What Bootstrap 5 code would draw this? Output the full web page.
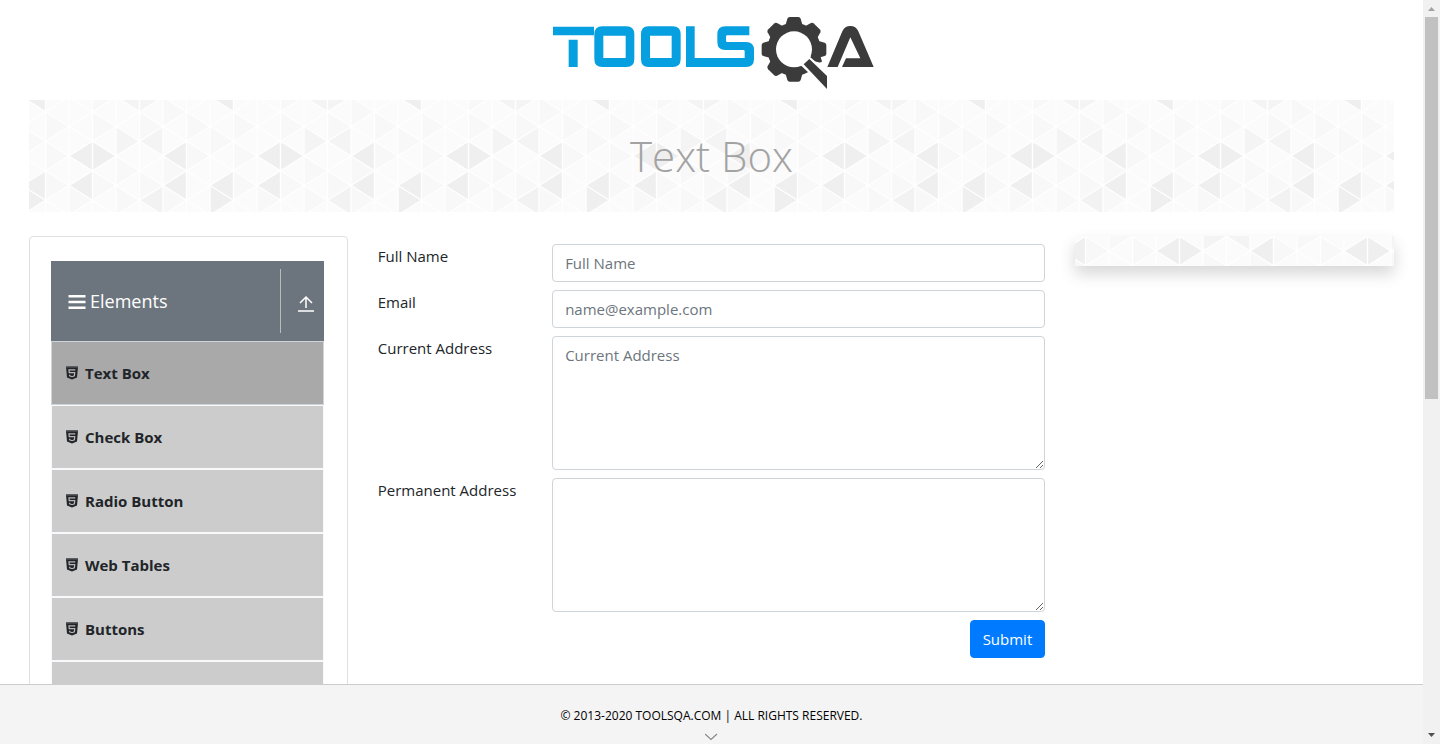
<!DOCTYPE html>
<html lang="en">
<head>
<meta charset="utf-8">
<meta name="viewport" content="width=device-width, initial-scale=1">
<title>ToolsQA - Text Box</title>
<link href="https://cdn.jsdelivr.net/npm/bootstrap@5.3.0/dist/css/bootstrap.min.css" rel="stylesheet">
<style>
  body { font-family: "Segoe UI", "Open Sans", sans-serif; font-size: 15px; line-height: 24px; color: #212529; }
  .triangles {
    background-color: #fbfbfb;
    background-image: url("data:image/svg+xml,%3Csvg xmlns='http://www.w3.org/2000/svg' width='188' height='118'%3E%3Crect width='188' height='118' fill='%23fbfbfb'/%3E%3Cg fill='%23f8f8f8'%3E%3Cpath d='M23.5 14.75l23.5 14.75l-23.5 14.75zM23.5 44.25l23.5 14.75l-23.5 14.75zM23.5 73.75l23.5 14.75l-23.5 14.75zM70.5-14.75l23.5 14.75l-23.5 14.75zM70.5 14.75l23.5 14.75l-23.5 14.75zM70.5 73.75l23.5 14.75l-23.5 14.75zM117.5 14.75l23.5 14.75l-23.5 14.75zM117.5 73.75l23.5 14.75l-23.5 14.75zM164.5 14.75l23.5 14.75l-23.5 14.75zM164.5 44.25l23.5 14.75l-23.5 14.75z'/%3E%3Cpath d='M0 29.5l23.5 14.75l-23.5 14.75zM94 59l23.5 14.75l-23.5 14.75zM94 88.5l23.5 14.75l-23.5 14.75zM141 0l23.5 14.75l-23.5 14.75zM141 59l23.5 14.75l-23.5 14.75zM141 88.5l23.5 14.75l-23.5 14.75zM47 88.5l23.5 14.75l-23.5 14.75z'/%3E%3C/g%3E%3Cpath fill='%23f4f4f4' d='M94 29.5l23.5 14.75L94 59zM141 29.5V59l-23.5-14.75zM94 0l23.5-14.75v29.5zM117.5-14.75L141 0l-23.5 14.75z'/%3E%3Cpath fill='%23f2f2f2' d='M117.5 103.25L141 88.5V118z'/%3E%3Cpath fill='%23efefef' d='M47 59l23.5-14.75L94 59 70.5 73.75zM0 88.5l23.5-14.75v29.5zM0 88.5l23.5 14.75L0 118zM47 88.5l23.5-14.75v29.5zM141 59l23.5-14.75v29.5zM141 88.5l23.5-14.75v29.5zM0 0l23.5-14.75v29.5z'/%3E%3Cpath fill='none' stroke='white' stroke-width='1.4' d='M0 0V118M23.5 0V118M47 0V118M70.5 0V118M94 0V118M117.5 0V118M141 0V118M164.5 0V118M188 0V118M0 0L188 118M0 29.5L141 118M0 59L94 118M0 88.5L47 118M47 0L188 88.5M94 0L188 59M141 0L188 29.5M188 0L0 118M188 29.5L47 118M188 59L94 118M188 88.5L141 118M141 0L0 88.5M94 0L0 59M47 0L0 29.5'/%3E%3C/svg%3E");
  }
  .page-wrap { padding: 0 29px; }
  .logo-row { padding: 5px 0; }
  .page-banner { height: 112px; background-position: -7px -3px; margin-bottom: 24px; }
  .page-banner h1 { font-size: 42px; line-height: 58px; font-weight: 300; color: #a3a3a3; }
  .wide-gutters { --bs-gutter-x: 30px; }
  .menu-card { border: 1px solid #dfdfdf; border-radius: 4px; padding: 24px 23px 24px 21px; }
  .menu-head { height: 80px; background: #6c757d; color: #fff; font-size: 18px; padding: 8px 0 8px 17px; }
  .menu-head button { width: 44px; border-left: 1px solid #bbb; padding-left: 8px; color: #fff; }
  .menu-link { height: 64px; padding: 0 14px; gap: 7px; background: #ccc; border: 1px solid #f8f9fa; color: #212529; font-weight: 700; text-decoration: none; }
  .menu-link.current { background: #a9a9a9; border-color: #ced4da; }
  .field { font-size: 15px; line-height: 24px; border-color: #ced4da; border-radius: 4px; color: #495057; }
  .field::placeholder { color: #6c757d; }
  .submit-btn { font-size: 15px; line-height: 24px; border-radius: 4px; background: #007bff; border-color: #007bff; }
  .side-ad { height: 30px; background-position: 34px -44px; box-shadow: 0 8px 16px rgba(0,0,0,.16); }
  .site-footer { height: 60px; background: #f4f4f4; border-top: 1px solid #ccc; font-size: 12px; line-height: 18px; padding-top: 22px; color: #000; }
  .scroll-track { width: 17px; background: #f1f1f1; }
  .scroll-track svg { display: block; }
  .scroll-thumb { width: 13px; background: #c1c1c1; flex: 0 0 auto; }
</style>
</head>
<body>
<svg class="d-none">
  <symbol id="shield" viewBox="0 0 12 14">
    <path fill="#212529" d="M0 1h12l-1 10.500L6 13.500l-5-2z"/>
    <path fill="#5d6063" d="M0 0h12v1.500H0z"/>
    <path fill="none" stroke="#b8b8b8" stroke-width="1.200" d="M9.300 3.800H3l.2 2.900h5.500l-.3 3.200-2.400.8-2.300-.8-.1-1.200"/>
  </symbol>
</svg>
<div class="d-flex vh-100 overflow-hidden">
  <div class="d-flex flex-column flex-grow-1 overflow-hidden">
    <main class="page-wrap flex-grow-1 overflow-hidden">
      <header class="logo-row d-flex justify-content-center">
        <a href="#" aria-label="ToolsQA">
          <svg class="d-block" width="345" height="90" viewBox="-3 0 1035 270">
            <g fill="#069fdf" fill-rule="evenodd">
              <path d="M39 65H162V91H39zM86 104h27v82H86z"/>
              <path d="M187 64h72q24 0 24 24v74q0 24-24 24h-72q-24 0-24-24V88q0-24 24-24zM190 92v67h67V92z"/>
              <path d="M325 64h73q24 0 24 24v74q0 24-24 24h-73q-22 0-22-24V88q0-24 22-24zM330 92v67h65V92z"/>
              <path d="M438 64h26v95h150v-20q0-4-4-4h-54q-24 0-24-24V88q0-24 24-24h72v27h-66q-4 0-4 4v12q0 4 4 4h56q24 0 24 24v27q0 24-24 24H438z"/>
            </g>
            <g fill="#3b3b3c">
              <circle cx="762" cy="133" r="80"/>
              <path id="cog" d="M736 62l6-21q2-5 7-5h26q5 0 7 5l6 21z"/>
              <use href="#cog" transform="rotate(45 762 133)"/>
              <use href="#cog" transform="rotate(90 762 133)"/>
              <use href="#cog" transform="rotate(180 762 133)"/>
              <use href="#cog" transform="rotate(225 762 133)"/>
              <use href="#cog" transform="rotate(270 762 133)"/>
              <use href="#cog" transform="rotate(315 762 133)"/>
              <circle cx="762" cy="133" r="54" fill="#fff"/>
              <path fill="#fff" d="M782 181l29-29 60 52v60z"/>
              <path d="M811 157l14 12q14 6 21 1l-8-28-22-8q3 12-5 23z"/>
              <path d="M791 178l17-16 53 51v39z"/>
              <path d="M862 186l45-107q7-16 24-16t24 16l46 107h-95l12-26h43l-30-63-38 89z"/>
            </g>
          </svg>
        </a>
      </header>
      <section class="page-banner triangles d-flex align-items-center justify-content-center">
        <h1 class="m-0">Text Box</h1>
      </section>
      <div class="row wide-gutters">
        <nav class="col-3" aria-label="Elements">
          <div class="menu-card">
            <div class="menu-head d-flex">
              <div class="d-flex align-items-center flex-grow-1 gap-1">
                <svg width="18" height="18" viewBox="0 0 18 18" fill="none" stroke="#fff" stroke-width="2.4"><path d="M.5 4.2h17M.5 10h17M.5 15.8h17"/></svg>
                <span>Elements</span>
              </div>
              <button type="button" class="btn rounded-0 border-top-0 border-bottom-0 border-end-0 py-0 pe-0" aria-label="Collapse">
                <svg width="16" height="18" viewBox="0 0 16 18" fill="none" stroke="#fff" stroke-width="1.5"><path d="M8 14V3M2 9l6-6 6 6M0 17h16"/></svg>
              </button>
            </div>
            <ul class="list-unstyled m-0">
              <li><a class="menu-link current d-flex align-items-center" href="#" aria-current="page"><svg width="12" height="14"><use href="#shield"/></svg>Text Box</a></li>
              <li><a class="menu-link d-flex align-items-center" href="#"><svg width="12" height="14"><use href="#shield"/></svg>Check Box</a></li>
              <li><a class="menu-link d-flex align-items-center" href="#"><svg width="12" height="14"><use href="#shield"/></svg>Radio Button</a></li>
              <li><a class="menu-link d-flex align-items-center" href="#"><svg width="12" height="14"><use href="#shield"/></svg>Web Tables</a></li>
              <li><a class="menu-link d-flex align-items-center" href="#"><svg width="12" height="14"><use href="#shield"/></svg>Buttons</a></li>
              <li><a class="menu-link d-flex" href="#" aria-label="More"></a></li>
            </ul>
          </div>
        </nav>
        <form class="col-6">
          <div class="row wide-gutters mt-2">
            <label class="col-3" for="userName">Full Name</label>
            <div class="col-9"><input type="text" class="form-control field" id="userName" placeholder="Full Name"></div>
          </div>
          <div class="row wide-gutters mt-2">
            <label class="col-3" for="userEmail">Email</label>
            <div class="col-9"><input type="email" class="form-control field" id="userEmail" placeholder="name@example.com"></div>
          </div>
          <div class="row wide-gutters mt-2">
            <label class="col-3" for="currentAddress">Current Address</label>
            <div class="col-9"><textarea class="form-control field" id="currentAddress" rows="5" placeholder="Current Address"></textarea></div>
          </div>
          <div class="row wide-gutters mt-2">
            <label class="col-3 text-nowrap" for="permanentAddress">Permanent Address</label>
            <div class="col-9"><textarea class="form-control field" id="permanentAddress" rows="5"></textarea></div>
          </div>
          <div class="d-flex justify-content-end mt-2">
            <button type="button" class="btn btn-primary submit-btn">Submit</button>
          </div>
        </form>
        <aside class="col-3"><div class="side-ad triangles"></div></aside>
      </div>
    </main>
    <footer class="site-footer d-flex flex-column align-items-center flex-shrink-0">
      <span>© 2013-2020 TOOLSQA.COM | ALL RIGHTS RESERVED.</span>
      <svg class="mt-2" width="14" height="8" viewBox="0 0 14 8" fill="none" stroke="#888" stroke-width="1.2"><path d="M0 1l6 5.500L12 1"/></svg>
    </footer>
  </div>
  <div class="scroll-track d-flex flex-column align-items-center flex-shrink-0" aria-hidden="true">
    <svg class="flex-shrink-0" width="17" height="17" viewBox="0 0 17 17"><path fill="#a3a3a3" d="M5 11h7L8.500 7z"/></svg>
    <div class="scroll-thumb" style="flex-basis:51.4%"></div>
    <svg class="mt-auto flex-shrink-0" width="17" height="17" viewBox="0 0 17 17"><path fill="#505050" d="M5 6h7l-3.500 4z"/></svg>
  </div>
</div>
<script src="https://cdn.jsdelivr.net/npm/bootstrap@5.3.0/dist/js/bootstrap.bundle.min.js"></script>
</body>
</html>
